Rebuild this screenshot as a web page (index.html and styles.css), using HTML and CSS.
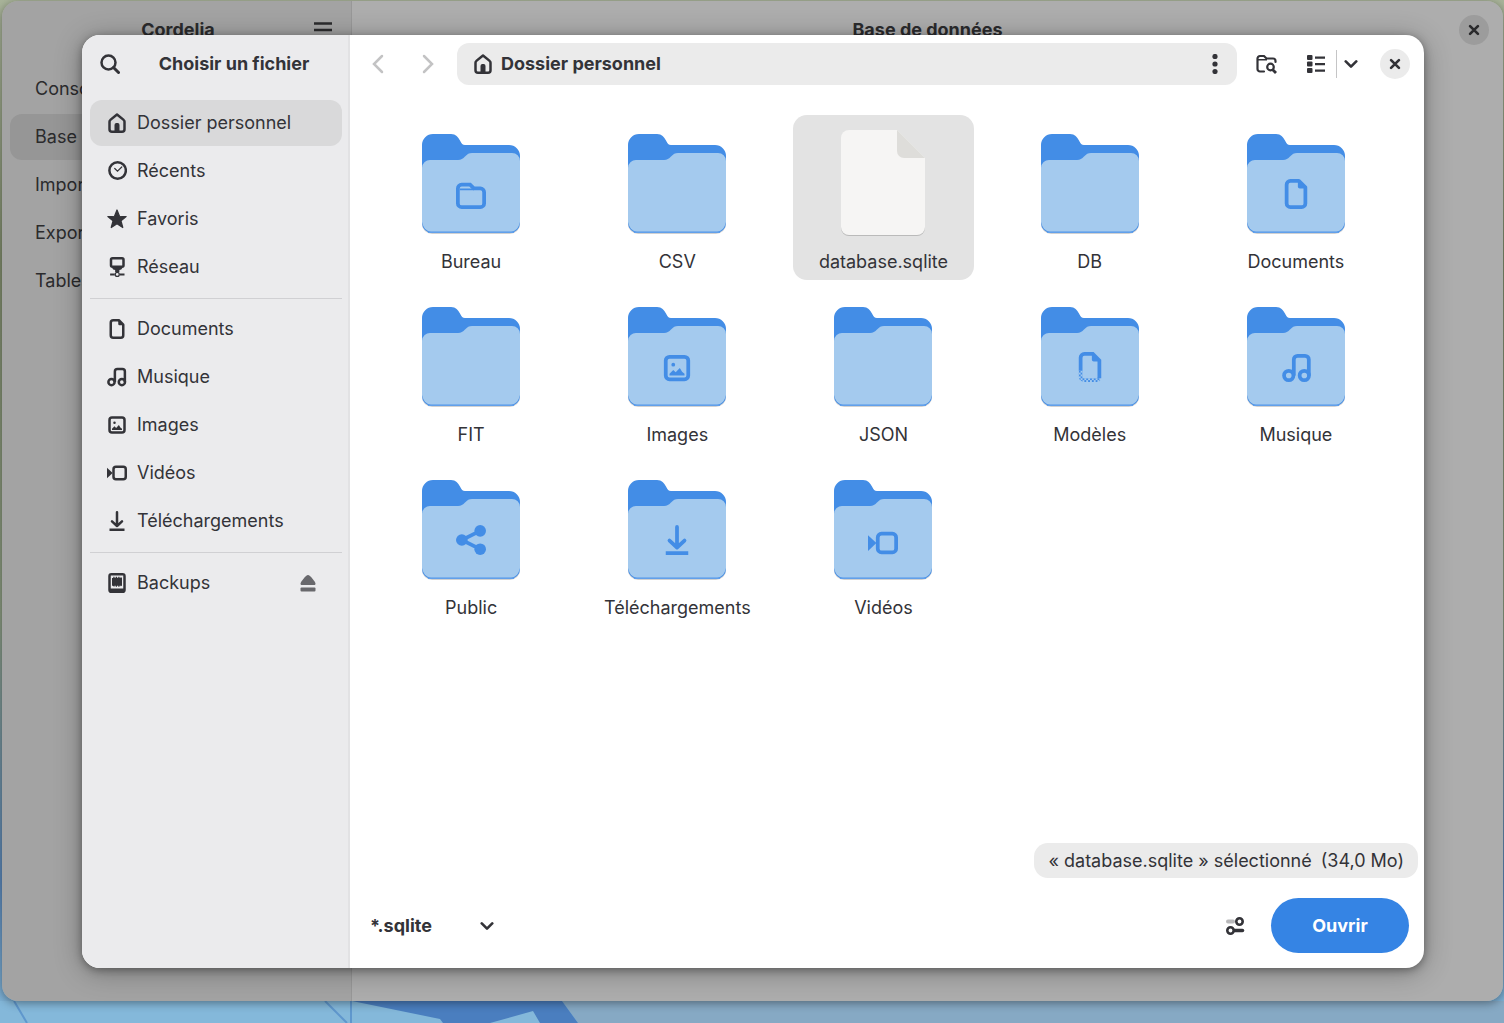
FILE: index.html
```html
<!DOCTYPE html>
<html lang="fr">
<head>
<meta charset="utf-8">
<title>Choisir un fichier</title>
<link rel="stylesheet" href="styles.css">
</head>
<body>
<svg class="defs" aria-hidden="true">
  <defs>
    <pattern id="checker" width="2" height="2" patternUnits="userSpaceOnUse">
      <path fill="#438de6" d="M0 0h1v1H0zM1 1h1v1H1z"/>
    </pattern>
    <symbol id="home" viewBox="0 0 16 16">
      <path fill="none" stroke="currentColor" stroke-width="2" stroke-linejoin="round" d="M2 7c0-.6.3-1.200.7-1.500L8 1.200l5.300 4.300c.4.3.7.9.7 1.500v6a2 2 0 0 1-2 2H4a2 2 0 0 1-2-2z"/>
      <path fill="currentColor" d="M6 15.500V9.500A1.500 1.500 0 0 1 7.500 8h1A1.500 1.500 0 0 1 10 9.500v6z"/>
    </symbol>
    <symbol id="clock" viewBox="0 0 16 16">
      <g fill="none" stroke="currentColor"><circle cx="8.500" cy="7.600" r="6.600" stroke-width="2"/><path stroke-linecap="round" d="M6.200 6l2.200 2.100 3.400-3.300"/></g>
    </symbol>
    <symbol id="star" viewBox="0 0 16 16">
      <path fill="currentColor" stroke="currentColor" stroke-linejoin="round" d="M8 .8l2 5 5.300.3-4.100 3.400 1.400 5.300L8 11.800l-4.600 3 1.400-5.300L.7 6.100 6 5.800z"/>
    </symbol>
    <symbol id="network" viewBox="0 0 16 16">
      <rect x="3.200" y="1" width="10" height="6.800" rx="1.200" fill="none" stroke="currentColor" stroke-width="2"/>
      <path fill="currentColor" d="M4 8.500h8.400l-1 1.500-1.500.4v1.600H6.500v-1.600L5 10zM2.500 13.100h3.700v1.700H2.500zM10.200 13.100H14v1.700h-3.800z"/>
      <circle cx="8.200" cy="13.900" r="1.600" fill="none" stroke="currentColor"/>
    </symbol>
    <symbol id="document" viewBox="0 0 16 16">
      <path fill="none" stroke="currentColor" stroke-width="2" stroke-linejoin="round" d="M5 1h4.500L13 4.500V13a2 2 0 0 1-2 2H5a2 2 0 0 1-2-2V3a2 2 0 0 1 2-2z"/>
      <path fill="currentColor" d="M9 1v3a1 1 0 0 0 1 1h3.500z"/>
    </symbol>
    <symbol id="music" viewBox="0 0 16 16">
      <g fill="none" stroke="currentColor" stroke-width="2"><circle cx="3.600" cy="12" r="2.500"/><circle cx="11.900" cy="12" r="2.500"/><path d="M6.300 12V3.500a2 2 0 0 1 2-2h4a2 2 0 0 1 2 2V12"/></g>
    </symbol>
    <symbol id="image" viewBox="0 0 16 16">
      <rect x="2" y="2" width="12" height="12" rx="2" fill="none" stroke="currentColor" stroke-width="2"/>
      <circle cx="6" cy="6.200" r="1" fill="currentColor"/>
      <path fill="currentColor" d="M4 12v-1l2-2 1.300 1.300L9.500 8l1.200 2L12 11v1z"/>
    </symbol>
    <symbol id="video" viewBox="0 0 16 16">
      <rect x="5.200" y="3" width="9.800" height="10" rx="2" fill="none" stroke="currentColor" stroke-width="2"/>
      <path fill="currentColor" d="M0 3.800l4.500 4.200L0 12.200z"/>
    </symbol>
    <symbol id="download" viewBox="0 0 16 16">
      <path fill="none" stroke="currentColor" stroke-width="2" stroke-linecap="round" stroke-linejoin="round" d="M8 1v11M4 8.300L8 12l4-3.700"/>
      <path fill="currentColor" d="M2 14h12v2H2z"/>
    </symbol>
    <symbol id="drive" viewBox="0 0 16 16">
      <path fill="currentColor" fill-rule="evenodd" d="M3.500 0h9A2.500 2.500 0 0 1 15 2.500v11a2.500 2.500 0 0 1-2.500 2.500h-9A2.500 2.500 0 0 1 1 13.500v-11A2.500 2.500 0 0 1 3.500 0zM3 2v10.300h10V2z"/>
      <path fill="currentColor" d="M4 4h1V3h1v.7h1V3h1v.7h1V3h1v.7h1V3l1 1v6l-1 .7v-.6h-1v.9H9v-.9H8v.9H7v-.9H6v.9L4 10z"/>
    </symbol>
    <symbol id="folder" viewBox="0 0 16 16">
      <path fill="none" stroke="currentColor" stroke-width="2" d="M3 3h4.500l2 2H13a2 2 0 0 1 2 2v6a2 2 0 0 1-2 2H3a2 2 0 0 1-2-2V5a2 2 0 0 1 2-2z"/>
      <path fill="currentColor" d="M2 5h7.500v1H2z"/>
    </symbol>
    <symbol id="share" viewBox="0 0 16 16">
      <g fill="currentColor"><circle cx="3.100" cy="8" r="3.100"/><circle cx="12.900" cy="3.100" r="3.100"/><circle cx="12.900" cy="12.900" r="3.100"/></g>
      <path fill="none" stroke="currentColor" stroke-width="2" d="M12.900 3.100L3.100 8l9.800 4.900"/>
    </symbol>
    <symbol id="template" viewBox="0 0 16 16">
      <path fill="none" stroke="currentColor" stroke-width="2" d="M3 10V3a2 2 0 0 1 2-2h4.500L13 4.500V14"/>
      <path fill="currentColor" d="M9 1v3a1 1 0 0 0 1 1h3.500z"/>
      <path fill="none" stroke="url(#checker)" stroke-width="2" d="M3 10v3a2 2 0 0 0 2 2h6a2 2 0 0 0 2-1"/>
    </symbol>
    <symbol id="close" viewBox="0 0 16 16">
      <path fill="none" stroke="currentColor" stroke-width="3" stroke-linecap="round" d="M3.500 3.500l9 9M12.500 3.500l-9 9"/>
    </symbol>
    <symbol id="chevron" viewBox="0 0 16 16">
      <path fill="none" stroke="currentColor" stroke-width="3" stroke-linecap="round" stroke-linejoin="round" d="M2 5l6 6 6-6"/>
    </symbol>
    <symbol id="dir" viewBox="0 0 120 120">
      <path fill="#000" opacity=".18" d="M11 43h98v59a10 10 0 0 1-10 10H21a10 10 0 0 1-10-10z"/>
      <path fill="#438de6" d="M11 23a11 11 0 0 1 11-11h18c5 0 7 3 9 6.500 1.500 3 2.500 4.500 5 4.500h44a11 11 0 0 1 11 11v67a10 10 0 0 1-10 10H21a10 10 0 0 1-10-10z"/>
      <path fill="#62a0ea" d="M17 109.500h86v1.500H17z"/>
      <path fill="#a4caee" d="M11 46a8 8 0 0 1 9-8h27c3 0 5-1.500 7-3.500 2.500-2.500 4-3.500 7-3.500h40a8 8 0 0 1 8 8v61c-1 5-4 9.500-9 9.500H20c-5 0-8-4.500-9-9.500z"/>
    </symbol>
  </defs>
</svg>

<svg class="wallpaper" viewBox="0 0 1504 22" preserveAspectRatio="none" aria-hidden="true">
  <path fill="#84b8da" d="M0 0h1504v22H0z"/>
  <path fill="#86a9c4" d="M562 0h942v22H578z"/>
  <path fill="#4a7ebf" d="M352 0h210l16 22h-38l-7-12-43 12h-47l-3-4z"/>
  <path fill="none" stroke="#5f97cd" stroke-width="2" d="M14 0l13 22M325 0l22 22M351 0v22"/>
</svg>

<div class="app">
  <aside class="app-side">
    <header class="app-bar">
      <h1 class="title">Cordelia</h1>
      <button class="app-menu" aria-label="Menu principal"><svg width="20" height="20" viewBox="0 0 20 20"><path stroke="currentColor" stroke-width="2.500" d="M1 3.500h18M1 10h18M1 16.500h18"/></svg></button>
    </header>
    <nav class="app-nav">
      <a href="#">Console</a>
      <a href="#" class="current">Base de données</a>
      <a href="#">Importer</a>
      <a href="#">Exporter</a>
      <a href="#">Tables</a>
    </nav>
  </aside>
  <main class="app-main">
    <header class="app-bar">
      <h2 class="title">Base de données</h2>
      <button class="round app-close" aria-label="Fermer la fenêtre"><svg class="i14"><use href="#close"/></svg></button>
    </header>
  </main>
</div>

<section class="dialog" role="dialog" aria-labelledby="dialog-title">
  <aside class="places">
    <header class="places-bar">
      <button class="flat" aria-label="Rechercher"><svg width="20" height="20" viewBox="0 0 20 20"><path fill="none" stroke="currentColor" stroke-width="3" stroke-linecap="round" d="M13.500 13.500l5 5"/><circle cx="8.500" cy="8.500" r="7" fill="none" stroke="currentColor" stroke-width="2.500"/></svg></button>
      <h2 class="title" id="dialog-title">Choisir un fichier</h2>
    </header>
    <nav class="places-nav">
      <div class="group">
        <a href="#" class="current"><svg class="i20"><use href="#home"/></svg>Dossier personnel</a>
        <a href="#"><svg class="i20"><use href="#clock"/></svg>Récents</a>
        <a href="#"><svg class="i20"><use href="#star"/></svg>Favoris</a>
        <a href="#"><svg class="i20"><use href="#network"/></svg>Réseau</a>
      </div>
      <div class="group">
        <a href="#"><svg class="i20"><use href="#document"/></svg>Documents</a>
        <a href="#"><svg class="i20"><use href="#music"/></svg>Musique</a>
        <a href="#"><svg class="i20"><use href="#image"/></svg>Images</a>
        <a href="#"><svg class="i20"><use href="#video"/></svg>Vidéos</a>
        <a href="#"><svg class="i20"><use href="#download"/></svg>Téléchargements</a>
      </div>
      <div class="group mount">
        <a href="#"><svg class="i20"><use href="#drive"/></svg>Backups</a>
        <button class="eject" aria-label="Éjecter"><svg width="16" height="18" viewBox="0 0 16 18"><path fill="currentColor" d="M.5 9.500C.5 8 6 1 8 1s7.500 7 7.500 8.500c0 1-.5 1.500-1.500 1.500H2C1 11 .5 10.500.5 9.500z"/><rect x=".5" y="13.500" width="15" height="4" rx="1" fill="currentColor"/></svg></button>
      </div>
    </nav>
  </aside>

  <div class="content">
    <header class="toolbar">
      <button class="step" aria-label="Précédent" disabled><svg width="14" height="20" viewBox="0 0 14 20"><path fill="none" stroke="currentColor" stroke-width="2.500" stroke-linecap="round" d="M11 2l-8 8 8 8"/></svg></button>
      <button class="step" aria-label="Suivant" disabled><svg width="14" height="20" viewBox="0 0 14 20"><path fill="none" stroke="currentColor" stroke-width="2.500" stroke-linecap="round" d="M3 2l8 8-8 8"/></svg></button>
      <div class="path">
        <button class="crumb"><svg class="i20"><use href="#home"/></svg>Dossier personnel</button>
        <button class="flat" aria-label="Menu du dossier"><svg width="6" height="20" viewBox="0 0 6 20"><g fill="currentColor"><circle cx="3" cy="2.500" r="2.600"/><circle cx="3" cy="10" r="2.600"/><circle cx="3" cy="17.500" r="2.600"/></g></svg></button>
      </div>
      <button class="flat find" aria-label="Rechercher dans le dossier"><svg width="22" height="20" viewBox="0 0 22 20"><g fill="none" stroke="currentColor" stroke-width="2.200"><path stroke-linecap="round" d="M9 17.500H5A2.500 2.500 0 0 1 2.500 15V4.500A2.500 2.500 0 0 1 5 2h4l2.500 2.500H18A2.500 2.500 0 0 1 20.500 7v1"/><circle cx="15.500" cy="13" r="3.300"/><path stroke-width="2.800" d="M17.500 15.500l3.500 3.500"/></g><path fill="currentColor" d="M3 5h9v1.500H3z"/></svg></button>
      <div class="view">
        <button class="flat list" aria-label="Affichage en liste"><svg width="20" height="20" viewBox="0 0 20 20"><g fill="currentColor"><rect x="1" y="1" width="5.500" height="5" rx="1"/><rect x="1" y="7.500" width="5.500" height="5" rx="1"/><rect x="1" y="14" width="5.500" height="5" rx="1"/><path d="M9 2.500h10v2.200H9zM9 9h10v2.200H9zM9 15.500h10v2.200H9z"/></g></svg></button>
        <button class="flat options" aria-label="Options d’affichage"><svg class="i14"><use href="#chevron"/></svg></button>
      </div>
      <button class="round" aria-label="Fermer"><svg class="i14"><use href="#close"/></svg></button>
    </header>

    <div class="files">
      <div class="grid">
        <button class="file"><svg class="thumb"><use href="#dir"/><use href="#folder" x="45" y="57" width="30" height="30"/></svg>Bureau</button>
        <button class="file"><svg class="thumb"><use href="#dir"/></svg>CSV</button>
        <button class="file selected"><svg class="thumb" viewBox="0 0 120 120"><path fill="#000" opacity=".18" d="M18 60h84v46a8 8 0 0 1-8 8H26a8 8 0 0 1-8-8z"/><path fill="#f6f5f4" d="M26 8h48l28 28v69a8 8 0 0 1-8 8H26a8 8 0 0 1-8-8V16a8 8 0 0 1 8-8z"/><path fill="#deddda" d="M74 8v21a7 7 0 0 0 7 7h21z"/></svg>database.sqlite</button>
        <button class="file"><svg class="thumb"><use href="#dir"/></svg>DB</button>
        <button class="file"><svg class="thumb"><use href="#dir"/><use href="#document" x="45" y="57" width="30" height="30"/></svg>Documents</button>
        <button class="file"><svg class="thumb"><use href="#dir"/></svg>FIT</button>
        <button class="file"><svg class="thumb"><use href="#dir"/><use href="#image" x="45" y="58" width="30" height="30"/></svg>Images</button>
        <button class="file"><svg class="thumb"><use href="#dir"/></svg>JSON</button>
        <button class="file"><svg class="thumb"><use href="#dir"/><use href="#template" x="45" y="57" width="30" height="30"/></svg>Modèles</button>
        <button class="file"><svg class="thumb"><use href="#dir"/><use href="#music" x="46" y="58" width="30" height="30"/></svg>Musique</button>
        <button class="file"><svg class="thumb"><use href="#dir"/><use href="#share" x="45" y="57" width="30" height="30"/></svg>Public</button>
        <button class="file"><svg class="thumb"><use href="#dir"/><use href="#download" x="45" y="57" width="30" height="30"/></svg>Téléchargements</button>
        <button class="file"><svg class="thumb"><use href="#dir"/><use href="#video" x="45" y="60" width="30" height="30"/></svg>Vidéos</button>
      </div>
      <p class="status" role="status"><span>« database.sqlite » sélectionné</span><span>(34,0 Mo)</span></p>
    </div>

    <footer class="actions">
      <div class="filter">
        <select aria-label="Type de fichier"><option>*.sqlite</option></select>
        <svg class="i14 arrow"><use href="#chevron"/></svg>
      </div>
      <button class="flat settings" aria-label="Options"><svg width="20" height="20" viewBox="0 0 20 20"><path stroke="#b8b8ba" stroke-width="4" stroke-linecap="round" d="M3 5.500h5"/><path stroke="currentColor" stroke-width="3.500" stroke-linecap="round" d="M8 14.500h9.500"/><g fill="#fff" stroke="currentColor" stroke-width="2.600"><circle cx="14.500" cy="5.500" r="3.200"/><circle cx="5.500" cy="14.500" r="3.200"/></g></svg></button>
      <button class="open">Ouvrir</button>
    </footer>
  </div>
</section>
</body>
</html>
```
FILE: styles.css
```css
* {
  box-sizing: border-box;
}

body {
  margin: 0;
  height: 100vh;
  min-height: 860px;
  padding: 1px 1px 22px 2px;
  position: relative;
  display: flex;
  overflow: hidden;
  background: linear-gradient(#a9b49a, #7f8b6c 25%, #8a9a80 60%, #5a86b8 86%, #84b8da);
  color: #333338;
  font: 18px/24px Inter, "Noto Sans", sans-serif;
  font-optical-sizing: none;
}

button,
select {
  font: inherit;
  font-optical-sizing: none;
  color: inherit;
  background: none;
  border: 0;
  padding: 0;
  margin: 0;
}

button {
  display: flex;
  align-items: center;
  justify-content: center;
}

a {
  color: inherit;
  text-decoration: none;
}

svg {
  display: block;
  flex: none;
}

.defs {
  position: absolute;
  width: 0;
  height: 0;
}

.wallpaper {
  position: absolute;
  left: 0;
  bottom: 0;
  width: 100%;
  height: 22px;
}

.i20 { width: 20px; height: 20px; }
.i14 { width: 14px; height: 14px; }

.title {
  margin: 0;
  font-size: 18px;
  line-height: 24px;
  font-weight: 700;
  text-align: center;
}

.round {
  width: 30px;
  height: 30px;
  border-radius: 50%;
  background: #ebebeb;
}

.flat {
  height: 42px;
}

/* Dimmed main window */
.app {
  flex: 1;
  position: relative;
  display: flex;
  border-radius: 16px;
  overflow: hidden;
  color: #2b2b2d;
  box-shadow: 0 2px 10px rgba(0, 0, 0, 0.4);
}

.app-side {
  width: 350px;
  background: #a3a3a3;
  border-right: 1px solid #989898;
}

.app-main {
  flex: 1;
  background: #adadad;
}

.app-bar {
  height: 58px;
  display: grid;
  grid-template-columns: 48px 1fr 48px;
  align-items: center;
  justify-items: center;
}

.app-bar .title {
  grid-column: 2;
}

.app-side .app-bar {
  padding-left: 3px;
}

.app-close {
  background: #9c9c9c;
  margin-right: 10px;
}

.app-menu {
  margin-right: 8px;
}

.app-nav {
  padding: 7px 8px;
  display: grid;
  gap: 2px;
}

.app-nav a {
  padding: 11px 25px;
  border-radius: 12px;
}

.app-nav .current {
  background: #969696;
}

/* File chooser */
.dialog {
  position: absolute;
  inset: 35px 80px 55px 82px;
  display: flex;
  border-radius: 18px;
  overflow: hidden;
  background: #fff;
  box-shadow: 0 2px 8px rgba(0, 0, 0, 0.35), 0 4px 28px rgba(0, 0, 0, 0.3);
}

.places {
  width: 268px;
  background: #ebebed;
  border-right: 2px solid #e2e2e4;
}

.places-bar {
  height: 58px;
  padding: 0 10px 0 8px;
  display: grid;
  grid-template-columns: 40px 1fr;
  align-items: center;
}

.places-nav {
  padding: 7px 6px 7px 8px;
}

.group {
  display: grid;
  gap: 2px;
}

.group + .group {
  border-top: 1px solid #d0d0d3;
  margin-top: 8px;
  padding-top: 7px;
}

.group a {
  display: flex;
  align-items: center;
  gap: 10px;
  height: 46px;
  padding: 0 17px;
  border-radius: 12px;
}

.group .current {
  background: #d9d9da;
}

.mount {
  grid-template-columns: 1fr 68px;
}

.eject {
  color: #68686c;
}

.content {
  flex: 1;
  min-width: 0;
  display: flex;
  flex-direction: column;
}

.toolbar {
  height: 58px;
  padding: 0 14px 0 7px;
  display: flex;
  align-items: center;
}

.step {
  width: 42px;
  height: 42px;
  margin-right: 8px;
  color: #c3c3c4;
}

.path {
  flex: 1;
  height: 42px;
  display: flex;
  justify-content: space-between;
  background: #ebebeb;
  border-radius: 12px;
  padding: 0 19px 0 16px;
}

.crumb {
  gap: 8px;
  font-weight: 700;
}

.find {
  margin: 0 18px;
}

.view {
  display: flex;
  align-items: center;
  margin: 0 22px 0 11px;
}

.list {
  padding-right: 10px;
  height: 28px;
  border-right: 1px solid #c5c5c6;
}

.options {
  padding-left: 7px;
}

.files {
  flex: 1;
  position: relative;
  padding: 22px 38px 0 31px;
}

.grid {
  display: grid;
  grid-template-columns: repeat(5, 1fr);
  gap: 8px 26px;
}

.file {
  flex-direction: column;
  gap: 8px;
  padding: 7px 0 6px;
  border-radius: 14px;
  white-space: nowrap;
}

.file.selected {
  background: #e3e3e3;
}

.thumb {
  width: 120px;
  height: 120px;
  color: #438de6;
}

/* Floats over the bottom corner of the file grid */
.status {
  position: absolute;
  right: 6px;
  bottom: 5px;
  margin: 0;
  height: 35px;
  padding: 6px 14px;
  display: flex;
  gap: 9px;
  background: #ebebeb;
  border-radius: 14px;
}

.actions {
  display: flex;
  align-items: center;
  padding: 15px 15px 15px 20px;
}

.filter {
  display: grid;
  align-items: center;
  margin-right: auto;
}

.filter select {
  grid-area: 1 / 1;
  appearance: none;
  width: 124px;
  height: 42px;
  font-weight: 700;
}

.arrow {
  grid-area: 1 / 1;
  justify-self: end;
  pointer-events: none;
}

.settings {
  margin-right: 26px;
}

.open {
  width: 138px;
  height: 55px;
  border-radius: 28px;
  background: #3584e4;
  color: #fff;
  font-weight: 700;
}
```
